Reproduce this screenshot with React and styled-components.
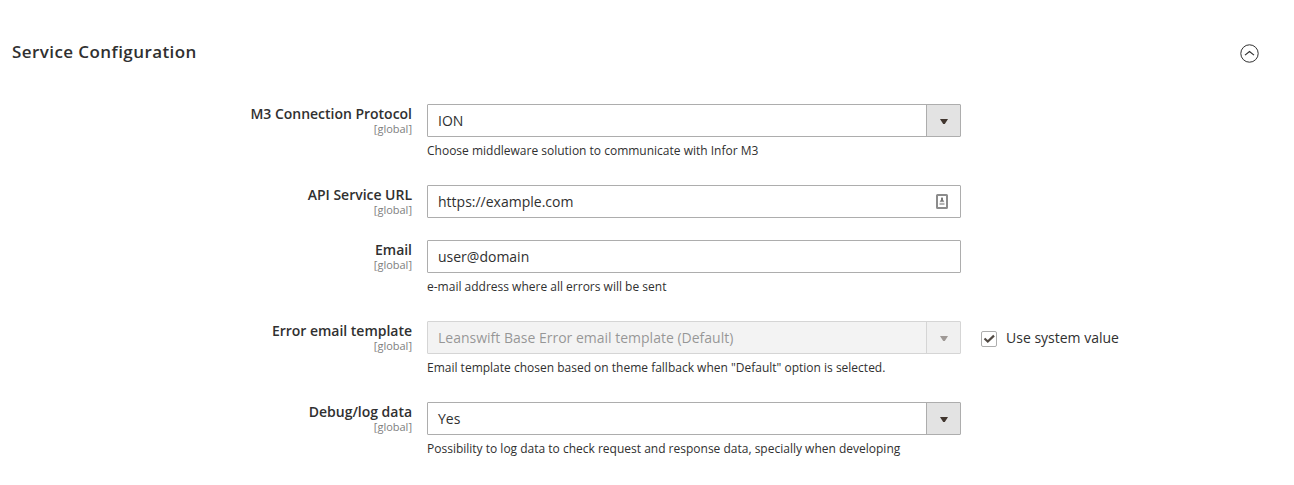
import React from "react";
import styled, { createGlobalStyle } from "styled-components";

const Global = createGlobalStyle`
  *, *::before, *::after { box-sizing: border-box; }
  body { margin: 0; background: #fff; color: #303030; font-family: "Open Sans", "Noto Sans", sans-serif; font-size: 14px; line-height: 19px; }
`;

const Section = styled.section`
  height: 485px;
  overflow: hidden;
`;
const Header = styled.header`
  display: flex;
  align-items: center;
  justify-content: space-between;
  height: 104px;
  padding: 0 35px 0 12px;
`;
const Title = styled.h2`
  margin: 0;
  font-size: 17px;
  font-weight: 600;
  line-height: 24px;
  letter-spacing: 0.425px;
`;
const Toggle = styled.button`
  display: flex;
  padding: 2px 0 0;
  border: 0;
  background: none;
`;
const Row = styled.div`
  display: flex;
  align-items: flex-start;
  margin-bottom: 22px;
`;
const Label = styled.label`
  width: 412px;
  margin-right: 15px;
  text-align: right;
  font-weight: 600;
  letter-spacing: -0.02px;
`;
const Scope = styled.span`
  display: block;
  margin-top: -1px;
  color: #808080;
  font-size: 11px;
  font-weight: 400;
  line-height: 14px;
  letter-spacing: 0;
`;
const Value = styled.div`
  width: 534px;
`;
const Field = styled.div`
  display: flex;
  align-items: center;
  height: 33px;
  padding-left: 10px;
  border: 1px solid #adadad;
  border-radius: 1px;
  background: ${(p) => (p.$disabled ? "#e9e9e9" : "#fff")};
  opacity: ${(p) => (p.$disabled ? 0.5 : 1)};
`;
const FieldText = styled.span`
  flex: 1;
`;
const Arrow = styled.span`
  display: flex;
  align-items: center;
  justify-content: center;
  width: 34px;
  height: 31px;
  padding: 1px 0 0 1px;
  border-left: 1px solid #adadad;
  background: #e3e3e3;
`;
const Autofill = styled.svg`
  margin-right: 12px;
`;
const Note = styled.p`
  margin: 3px 0 0;
  padding-bottom: 2px;
  font-size: 12px;
  line-height: 21px;
`;
const SystemValue = styled.label`
  display: flex;
  align-items: center;
  height: 33px;
  margin-left: 20px;
`;
const Checkbox = styled.span`
  display: flex;
  width: 16px;
  height: 16px;
  margin: 2px 9px 0 0;
  border: 1px solid #adadad;
  border-radius: 2px;
`;

function Select({ value, disabled }) {
  return (
    <Field $disabled={disabled}>
      <FieldText>{value}</FieldText>
      <Arrow>
        <svg width="8" height="5" viewBox="0 0 8 5"><path d="M0 0h8L4.8 5H3.2z" fill="#41362f" /></svg>
      </Arrow>
    </Field>
  );
}

function Input({ value, autofill }) {
  return (
    <Field>
      <FieldText>{value}</FieldText>
      {autofill && (
        <Autofill width="12" height="15" viewBox="0 0 12 15" fill="none">
          <rect x="1" y="1" width="10" height="13" rx="0.5" stroke="#8c8c8c" strokeWidth="2" />
          <path d="M6 3L7 4.2v1.6l1.3 2H3.7l1.3-2V4.2z" fill="#777" />
          <path d="M3.5 8.8h5v2.2h-5z" fill="#b5b5b5" />
        </Autofill>
      )}
    </Field>
  );
}

function FormRow({ label, note, side, children }) {
  return (
    <Row>
      <Label>{label}<Scope>[global]</Scope></Label>
      <Value>{children}{note && <Note>{note}</Note>}</Value>
      {side}
    </Row>
  );
}

export default function App() {
  return (
    <Section>
      <Global />
      <Header>
        <Title>Service Configuration</Title>
        <Toggle aria-label="Collapse">
          <svg width="19" height="19" viewBox="0 0 19 19" fill="none" stroke="#303030">
            <circle cx="9.5" cy="9.5" r="8.7" strokeWidth="1" />
            <path d="M5 11.1l4.5-3.5 4.5 3.5" strokeWidth="1.2" />
          </svg>
        </Toggle>
      </Header>
      <FormRow label="M3 Connection Protocol" note="Choose middleware solution to communicate with Infor M3">
        <Select value="ION" />
      </FormRow>
      <FormRow label="API Service URL">
        <Input value="https://example.com" autofill />
      </FormRow>
      <FormRow label="Email" note="e-mail address where all errors will be sent">
        <Input value="user@domain" />
      </FormRow>
      <FormRow
        label="Error email template"
        note={'Email template chosen based on theme fallback when "Default" option is selected.'}
        side={
          <SystemValue>
            <Checkbox>
              <svg width="14" height="14" viewBox="0 0 14 14"><path d="M2.5 6.5l3.3 3L12 3.6" fill="none" stroke="#514943" strokeWidth="2.2" /></svg>
            </Checkbox>
            Use system value
          </SystemValue>
        }
      >
        <Select value="Leanswift Base Error email template (Default)" disabled />
      </FormRow>
      <FormRow label="Debug/log data" note="Possibility to log data to check request and response data, specially when developing">
        <Select value="Yes" />
      </FormRow>
    </Section>
  );
}
